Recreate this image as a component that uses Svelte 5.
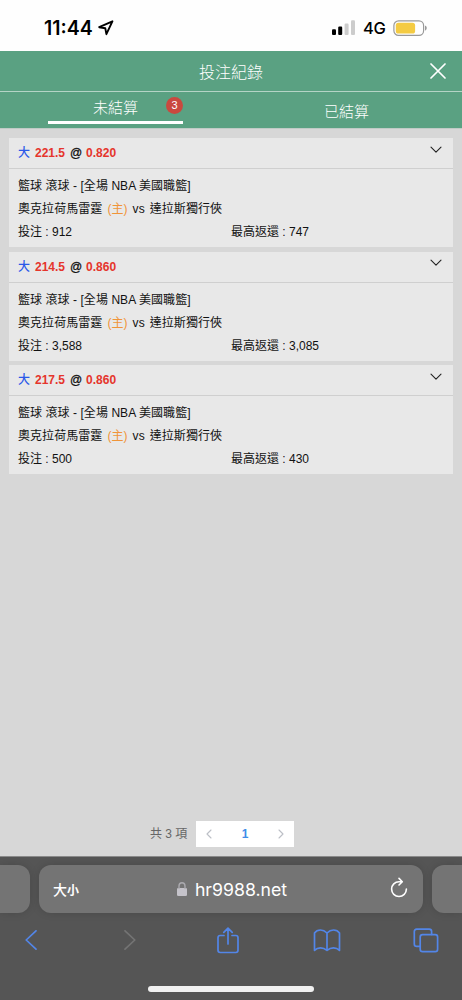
<script lang="ts">
  interface Bet {
    id: number;
    line: string;
    odds: string;
    stake: string;
    payout: string;
  }

  const bets: Bet[] = [
    { id: 1, line: '221.5', odds: '0.820', stake: '912', payout: '747' },
    { id: 2, line: '214.5', odds: '0.860', stake: '3,588', payout: '3,085' },
    { id: 3, line: '217.5', odds: '0.860', stake: '500', payout: '430' },
  ];

  let activeTab = $state('open');
</script>

<div class="screen">
  <div class="status">
    <span class="clock">11:44</span>
    <svg class="location" width="16" height="16" viewBox="0 0 16 16">
      <path d="M14.4 1.3 L1.2 7.2 L7.3 8.3 L8.4 14.2 Z" />
    </svg>
    <svg class="signal" width="25" height="16" viewBox="0 0 25 16">
      <rect x="1" y="9.3" width="4" height="5.7" rx="1.1" />
      <rect x="7.2" y="6.6" width="4" height="8.4" rx="1.1" />
      <rect class="off" x="13.6" y="3.6" width="4" height="11.4" rx="1.1" />
      <rect class="off" x="20" y="0.3" width="4" height="14.7" rx="1.1" />
    </svg>
    <span class="network">4G</span>
    <svg class="battery" width="35" height="17" viewBox="0 0 35 17">
      <rect class="shell" x="0.9" y="0.9" width="29.7" height="14.4" rx="4.6" />
      <rect class="charge" x="2.8" y="2.7" width="19.3" height="10.8" rx="2.6" />
      <path class="cap" d="M32 5.5 Q33.8 6.2 33.8 8.1 Q33.8 10 32 10.7 Z" />
    </svg>
  </div>

  <header class="title-bar">
    <h1>投注紀錄</h1>
    <button class="close" aria-label="關閉">
      <svg width="16" height="16" viewBox="0 0 16 16">
        <path d="M1 1 L15 15 M15 1 L1 15" />
      </svg>
    </button>
  </header>

  <nav class="tabs">
    <button class="tab" class:active={activeTab === 'open'} onclick={() => (activeTab = 'open')}>
      未結算
      <span class="badge">{bets.length}</span>
    </button>
    <button class="tab" class:active={activeTab === 'settled'} onclick={() => (activeTab = 'settled')}>
      已結算
    </button>
  </nav>

  <main class="list">
    {#each bets as bet (bet.id)}
      <article class="card">
        <div class="card-head">
          <span class="pick">大</span>
          <span class="red">{bet.line}</span>
          <span class="at">@</span>
          <span class="red">{bet.odds}</span>
          <svg class="chevron" width="12" height="8" viewBox="0 0 12 8">
            <path d="M1 1.2 L6 6.2 L11 1.2" />
          </svg>
        </div>
        <div class="card-body">
          <p class="league">籃球 滾球 - [全場 NBA 美國職籃]</p>
          <p class="teams">
            <span>奧克拉荷馬雷霆</span>
            <span class="home">(主)</span>
            <span>vs</span>
            <span>達拉斯獨行俠</span>
          </p>
          <p class="amounts">
            <span>投注 : {bet.stake}</span>
            <span>最高返還 : {bet.payout}</span>
          </p>
        </div>
      </article>
    {/each}

    <div class="pagination">
      <span class="total">共 {bets.length} 項</span>
      <div class="pager">
        <svg width="6" height="10" viewBox="0 0 6 10"><path d="M5 1 L1 5 L5 9" /></svg>
        <span class="page">1</span>
        <svg width="6" height="10" viewBox="0 0 6 10"><path d="M1 1 L5 5 L1 9" /></svg>
      </div>
    </div>
  </main>

  <footer class="browser">
    <div class="addresses">
      <div class="side left"></div>
      <div class="address">
        <span class="size">大<small>小</small></span>
        <span class="host">
          <svg width="10" height="14" viewBox="0 0 10 14">
            <rect x="0" y="6" width="10" height="8" rx="1.3" />
            <path d="M2 6.5 V4 Q2 0.8 5 0.8 Q8 0.8 8 4 V6.5" />
          </svg>
          hr9988.net
        </span>
        <svg class="reload" width="18" height="21" viewBox="0 0 18 21">
          <path d="M12 4.7 H9 A7.4 7.4 0 1 0 16.4 12.1 M9 1.4 L12.3 4.7 L9 8" />
        </svg>
      </div>
      <div class="side right"></div>
    </div>

    <div class="tools">
      <svg width="12" height="20" viewBox="0 0 12 20"><path d="M11 0.8 L1.2 10 L11 19.2" /></svg>
      <svg class="disabled" width="12" height="20" viewBox="0 0 12 20"><path d="M1 0.8 L10.8 10 L1 19.2" /></svg>
      <svg class="share" width="22" height="27" viewBox="0 0 22 27">
        <path d="M7 8.5 H3.2 Q1 8.5 1 10.7 V23.3 Q1 25.5 3.2 25.5 H18.8 Q21 25.5 21 23.3 V10.7 Q21 8.5 18.8 8.5 H15 M11 17 V1.3 M6.8 5.4 L11 1.2 L15.2 5.4" />
      </svg>
      <svg class="book" width="28" height="23" viewBox="0 0 28 23">
        <path d="M14 4 Q11 1 7.5 1 Q3.5 1 1.5 4 V21.3 Q4 18.9 7.5 18.9 Q11 18.9 14 21.3 Q17 18.9 20.5 18.9 Q24 18.9 26.5 21.3 V4 Q24.5 1 20.5 1 Q17 1 14 4 V21" />
      </svg>
      <svg width="26" height="25" viewBox="0 0 26 25">
        <rect x="7.2" y="6.7" width="17.4" height="17" rx="2.4" />
        <path d="M7 18.4 H3.7 Q1.3 18.4 1.3 16 V3.6 Q1.3 1.2 3.7 1.2 H16.2 Q18.6 1.2 18.6 3.6 V6.5" />
      </svg>
    </div>
    <div class="home-bar"></div>
  </footer>
</div>

<style>
  :global(body) {
    background: #d7d7d7;
  }

  .screen {
    width: 462px;
    height: 1000px;
    overflow: hidden;
    display: flex;
    flex-direction: column;
    background: #d7d7d7;
    color: #111;
    font-family: 'Liberation Sans', 'Noto Sans CJK TC', sans-serif;
  }

  svg {
    display: block;
    flex: none;
    fill: none;
    stroke-linecap: round;
    stroke-linejoin: round;
  }

  button {
    border: 0;
    padding: 0;
    background: none;
    color: inherit;
    font: inherit;
  }

  .status {
    box-sizing: border-box;
    height: 51px;
    flex: none;
    padding: 5px 34px 0 44px;
    display: flex;
    align-items: center;
    background: #fefefe;
    color: #000;
    font-family: Inter, sans-serif;
  }

  .clock {
    width: 49px;
    font-size: 19.5px;
    font-weight: 600;
    white-space: nowrap;
  }

  .location {
    margin-left: 5px;
    stroke: #000;
    stroke-width: 1.9;
  }

  .signal {
    margin-left: auto;
    fill: #000;
  }

  .off {
    fill: #ccc;
  }

  .network {
    width: 22px;
    margin: 0 8px 0 7px;
    font-size: 16.5px;
    font-weight: 500;
    letter-spacing: -0.4px;
  }

  .shell {
    stroke: #999;
    stroke-width: 1.2;
  }

  .charge {
    fill: #f4cb43;
  }

  .cap {
    fill: #999;
  }

  .title-bar {
    position: relative;
    height: 40px;
    flex: none;
    display: flex;
    align-items: center;
    justify-content: center;
    background: #5aa182;
    color: #fff;
    border-bottom: 1px solid #b4d4c6;
  }

  h1 {
    margin: 0;
    font-size: 16px;
    font-weight: 300;
  }

  .close {
    position: absolute;
    right: 16px;
    top: 12px;
  }

  .close svg {
    stroke: #fff;
    stroke-width: 1.7;
  }

  .tabs {
    height: 36px;
    flex: none;
    display: flex;
    background: #5aa182;
    border-bottom: 1px solid #c0cbc6;
  }

  .tab {
    position: relative;
    box-sizing: border-box;
    flex: 1;
    color: #fff;
    font-size: 15px;
    font-weight: 300;
  }

  .tab.active {
    flex: none;
    width: 135px;
    height: 32px;
    margin: 0 48px;
    border-bottom: 3px solid #fff;
  }

  .badge {
    position: absolute;
    right: 0;
    top: 5px;
    width: 17px;
    height: 17px;
    border-radius: 50%;
    background: #c9493f;
    font-size: 11px;
    line-height: 17px;
    font-weight: 400;
  }

  .list {
    flex: 1;
    display: flex;
    flex-direction: column;
    gap: 4.7px;
    padding: 9px 9px;
  }

  .card {
    height: 109px;
    flex: none;
    background: #e8e8e8;
    font-size: 12px;
  }

  .card-head {
    height: 30px;
    padding: 0 11px 0 9px;
    display: flex;
    align-items: center;
    border-bottom: 1px solid #cfcfcf;
    font-weight: 700;
  }

  .pick {
    width: 17px;
    line-height: 16px;
    color: #2b59e8;
    font-weight: 500;
  }

  .red {
    color: #e5352c;
  }

  .at {
    width: 16px;
    margin-left: 5px;
    font-weight: 400;
    -webkit-text-stroke: 0.3px #111;
  }

  .chevron {
    margin: -7px 0 0 auto;
    stroke: #222;
    stroke-width: 1.1;
  }

  .card-body {
    padding: 6px 9px 0;
  }

  p {
    margin: 0;
    height: 23px;
    line-height: 23px;
    white-space: nowrap;
  }

  .league {
    letter-spacing: 0.06px;
  }

  .teams {
    display: flex;
    gap: 5px;
    letter-spacing: 0.06px;
  }

  .home {
    color: #f09438;
  }

  .amounts {
    display: grid;
    grid-template-columns: 213px 1fr;
  }

  .pagination {
    margin: auto auto 0 141px;
    display: flex;
    align-items: center;
    gap: 9px;
  }

  .total {
    width: 37px;
    padding-bottom: 3px;
    color: #666;
    font-size: 12px;
    white-space: nowrap;
  }

  .pager {
    box-sizing: border-box;
    width: 98px;
    height: 26px;
    padding: 0 10px;
    display: flex;
    align-items: center;
    justify-content: space-between;
    background: #fff;
  }

  .pager svg {
    stroke: #bcbfc6;
    stroke-width: 1.1;
  }

  .page {
    color: #3f8de8;
    font-size: 12px;
    font-weight: 700;
  }

  .browser {
    box-sizing: border-box;
    height: 144px;
    flex: none;
    padding-top: 8px;
    display: flex;
    flex-direction: column;
    background: #555;
    border-top: 1px solid #8a8a8a;
  }

  .addresses {
    height: 48px;
    display: flex;
    gap: 9px;
  }

  .side {
    width: 30px;
    background: #747474;
    box-shadow: 0 0 8px rgba(0, 0, 0, 0.14);
  }

  .left {
    border-radius: 0 12px 12px 0;
  }

  .right {
    border-radius: 12px 0 0 12px;
  }

  .address {
    box-sizing: border-box;
    width: 384px;
    padding: 0 15px 0 14px;
    display: flex;
    align-items: center;
    justify-content: space-between;
    border-radius: 12px;
    background: #747474;
    box-shadow: 0 0 8px rgba(0, 0, 0, 0.14);
    color: #fff;
  }

  .size {
    width: 28px;
    font-size: 14px;
    font-weight: 500;
    white-space: nowrap;
  }

  .size small {
    font-size: 12px;
    font-weight: 700;
  }

  .host {
    display: flex;
    align-items: center;
    gap: 8px;
    margin-right: 7px;
    font-family: Inter, sans-serif;
    font-size: 17.7px;
  }

  .host svg {
    fill: #c5c3ca;
  }

  .host path {
    fill: none;
    stroke: #aaa9ae;
    stroke-width: 1.4;
  }

  .reload {
    margin-top: -3px;
    stroke: #fff;
    stroke-width: 1.6;
  }

  .tools {
    height: 54px;
    margin: 0 -13px 0 -18px;
    display: grid;
    grid-template-columns: repeat(5, 1fr);
    align-items: center;
    justify-items: center;
  }

  .tools svg {
    stroke: #5386e8;
    stroke-width: 1.7;
  }

  .tools .disabled {
    stroke: #747474;
  }

  .home-bar {
    width: 166px;
    height: 6px;
    margin: 19px auto 0;
    border-radius: 3px;
    background: #f1f1f1;
  }
</style>
